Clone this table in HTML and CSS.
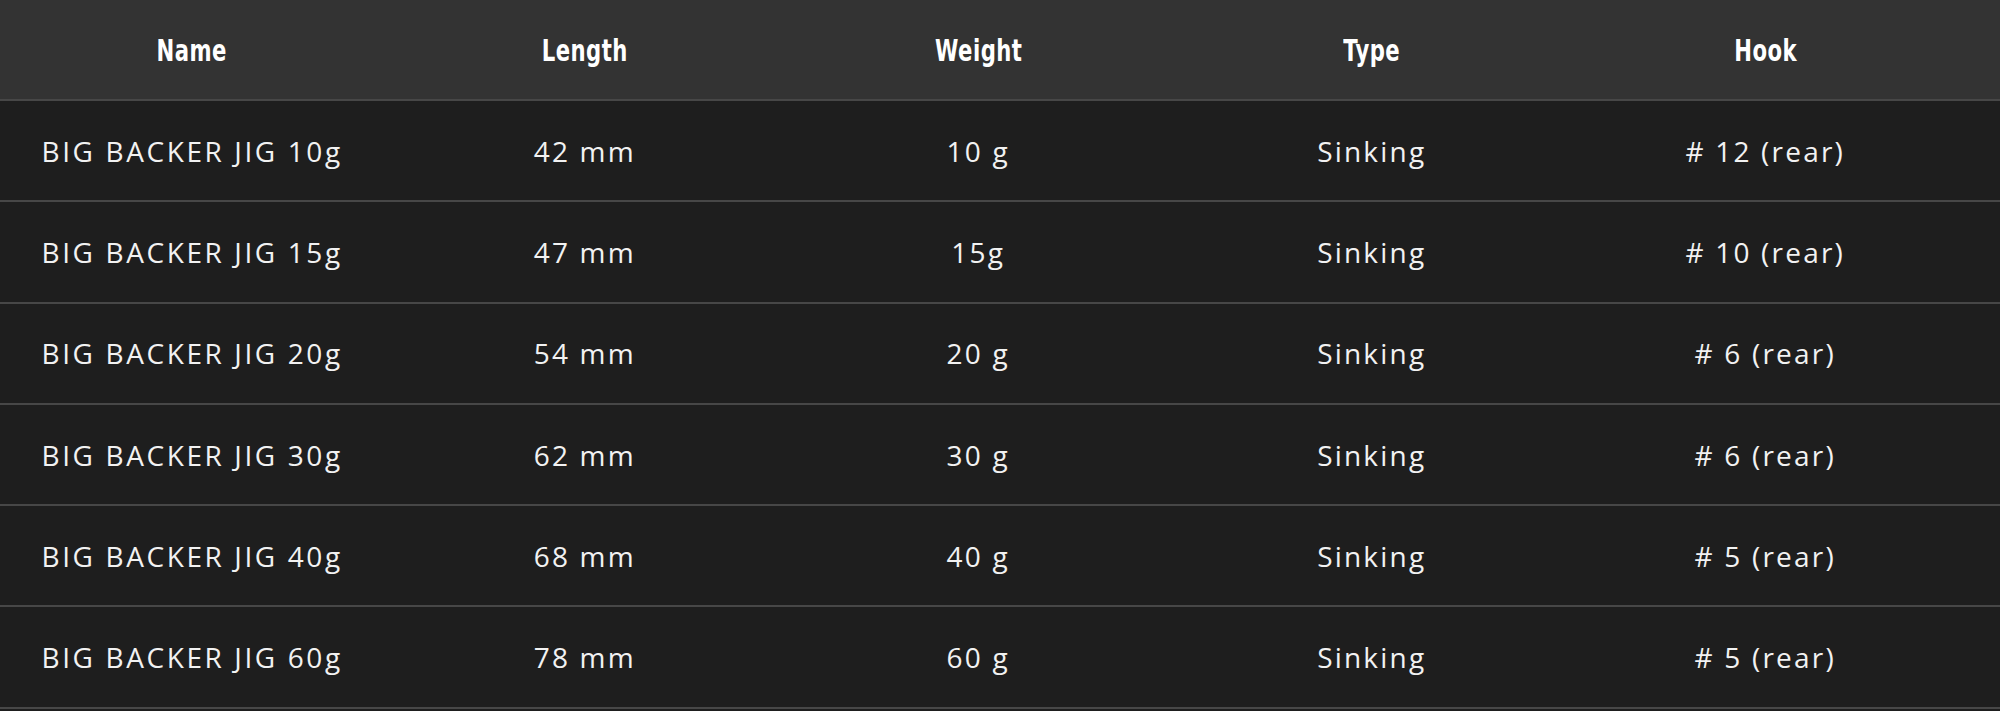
FILE: index.html
```html
<!DOCTYPE html>
<html lang="en">
<head>
<meta charset="utf-8">
<title>Big Backer Jig specs</title>
<link rel="stylesheet" href="styles.css">
</head>
<body>
<div class="spec-table">
  <div class="row head">
    <div class="cell">Name</div>
    <div class="cell">Length</div>
    <div class="cell">Weight</div>
    <div class="cell">Type</div>
    <div class="cell">Hook</div>
  </div>
  <div class="row">
    <div class="cell name">BIG BACKER JIG 10g</div>
    <div class="cell">42 mm</div>
    <div class="cell">10 g</div>
    <div class="cell">Sinking</div>
    <div class="cell"># 12 (rear)</div>
  </div>
  <div class="row">
    <div class="cell name">BIG BACKER JIG 15g</div>
    <div class="cell">47 mm</div>
    <div class="cell">15g</div>
    <div class="cell">Sinking</div>
    <div class="cell"># 10 (rear)</div>
  </div>
  <div class="row">
    <div class="cell name">BIG BACKER JIG 20g</div>
    <div class="cell">54 mm</div>
    <div class="cell">20 g</div>
    <div class="cell">Sinking</div>
    <div class="cell"># 6 (rear)</div>
  </div>
  <div class="row">
    <div class="cell name">BIG BACKER JIG 30g</div>
    <div class="cell">62 mm</div>
    <div class="cell">30 g</div>
    <div class="cell">Sinking</div>
    <div class="cell"># 6 (rear)</div>
  </div>
  <div class="row">
    <div class="cell name">BIG BACKER JIG 40g</div>
    <div class="cell">68 mm</div>
    <div class="cell">40 g</div>
    <div class="cell">Sinking</div>
    <div class="cell"># 5 (rear)</div>
  </div>
  <div class="row">
    <div class="cell name">BIG BACKER JIG 60g</div>
    <div class="cell">78 mm</div>
    <div class="cell">60 g</div>
    <div class="cell">Sinking</div>
    <div class="cell"># 5 (rear)</div>
  </div>
</div>
</body>
</html>
```
FILE: styles.css
```css
html, body {
  margin: 0;
  padding: 0;
  background: #1e1e1e;
}

body {
  font-family: "Open Sans", "Noto Sans", sans-serif;
  color: #f2f2f2;
  overflow: hidden;
}

.spec-table {
  display: flex;
  flex-direction: column;
}

.row {
  display: grid;
  grid-template-columns: repeat(5, 393.5px);
  align-items: center;
  margin-left: -5.5px;
  height: 99.3px;
  border-bottom: 2px solid #474747;
  background: #1e1e1e;
  font-size: 28px;
  letter-spacing: 2.2px;
}

.row.head {
  height: 99px;
  background: #333333;
  font-family: "DejaVu Sans Condensed", "DejaVu Sans", sans-serif;
  font-stretch: condensed;
  font-weight: bold;
  font-size: 31px;
  letter-spacing: 0.6px;
  color: #ffffff;
}

.head .cell {
  transform: scaleX(0.76);
}

.cell {
  text-align: center;
  white-space: nowrap;
}

.cell.name {
  text-align: left;
  padding-left: 47px;
  letter-spacing: 2.6px;
}
```
